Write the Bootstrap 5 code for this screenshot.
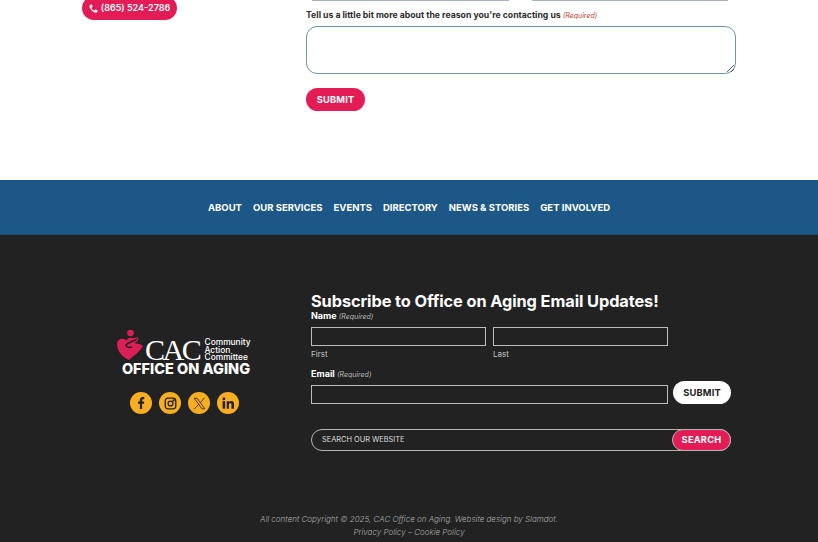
<!DOCTYPE html>
<html lang="en"><head><meta charset="utf-8">
<link href="https://cdn.jsdelivr.net/npm/bootstrap@5.3.0/dist/css/bootstrap.min.css" rel="stylesheet">
<style>
html,body{height:542px;overflow:hidden}
body{font-family:Inter,"Liberation Sans",sans-serif;background:#fff;color:#222}
.pagewrap{width:818px}
.upper{height:180px}
.leftcol{width:306px;padding-left:82px;flex:none}
.phonebtn{width:95px;height:24px;margin-top:-4px;background:#e31c55;color:#fff;border-radius:12px;font-size:9px;font-weight:600;gap:3px}
.rightcol{width:430px;flex:none}
.topinputs{height:1px;gap:23px;padding:0 8px 0 6px}
.topinputs span{background:#a9b4bd;height:1px;display:block}
.reqlabel{font-size:8.7px;font-weight:700;margin-top:8px;line-height:12px;color:#2d2d2d}
.req{font-size:7px;font-style:italic;font-weight:400;color:#c0392b}
.bigarea.form-control{height:48px;margin-top:4px;border:1px solid #6d94b0;border-radius:11px;box-shadow:none;display:block}
.pinkbtn{background:#e31c55;color:#fff;border-radius:14px;font-weight:700;font-size:9.3px;letter-spacing:.2px;border:0;padding:0}
.subbtn{width:59px;height:23px;margin-top:14px}
.navband{height:55px;background:#1d5788;gap:11px;border-bottom:1px solid #1a4d78;font-size:9.5px;font-weight:700;color:#fff;padding-top:2px}
.navband a{color:#fff;text-decoration:none}
.darkfoot{height:307px;background:#222;color:#fff;position:relative}
.logocol{width:311px;flex:none;padding-top:94px}
.logobox{height:33px;width:138px;margin-left:116px}
.logotype{font-family:"Liberation Serif",serif;font-size:30px;line-height:30px;letter-spacing:-2.4px;color:#fff;margin:6px 0 0 1px}
.logosmall{font-size:8.4px;line-height:7.5px;font-weight:500;margin:10px 0 0 5px}
.aging{font-size:14.5px;font-weight:800;line-height:13px;width:140px;margin-left:116px;text-align:center;margin-top:0;white-space:nowrap}
.socials{gap:7px;margin-top:17px;margin-left:130px}
.socialdot{width:22px;height:22px;border-radius:50%;background:#f9ae21}
.formcol{width:420px;flex:none}
.subtitle{font-size:16.35px;font-weight:700;line-height:20px;margin:56px 0 0;color:#fff;letter-spacing:-.1px}
.flabel{font-size:9px;font-weight:700;line-height:12px;margin-top:-1px}
.flabel .req{color:#bbb;font-size:7px}
.nameline{gap:7px;margin-top:4px}
.namefield{width:175px}
.dkinput.form-control{height:19px;min-height:0;padding:0;border:1px solid #bdbdbd;border-radius:0;background:transparent;display:block}
.sublabel{font-size:8px;line-height:10px;color:#c4c4c4;margin-top:3px}
.emaillabel{margin-top:9px}
.emailline{gap:5px;margin-top:0}
.emailinput.form-control{width:357px;flex:none}
.whitebtn{width:59px;height:23px;border-radius:14px;background:#fff;color:#222;font-size:9.3px;font-weight:700;letter-spacing:.2px;border:0;padding:0}
.searchbar{width:420px;height:22px;border:1px solid #b5b5b5;border-radius:12px;margin-top:25px;font-size:7.4px;color:#ddd;padding-left:10px}
.searchbtn{width:59px;height:22px;margin:-1px -1px -1px auto;border:1px solid #b5b5b5}
.copyline{position:absolute;left:0;right:0;top:278px;font-size:8px;line-height:13px;font-style:italic;font-weight:300;color:#aaa;text-align:center}
</style></head>
<body>
<div class="pagewrap">
 <div class="upper d-flex">
  <div class="leftcol"><div class="phonebtn d-flex align-items-center justify-content-center">
   <svg width="9" height="9" viewBox="0 0 16 16" fill="#fff"><path d="M3.600.8 1.500 2.200C.7 3 .6 4.600 1.500 6.800c2 4.200 4.700 7 8.800 8.400 1.700.5 3.200.3 4-.5l1.200-2.100c.2-.4.100-.8-.3-1l-3-1.800c-.3-.2-.8-.1-1 .2l-1.100 1.300c-.3.300-.7.400-1.100.2C7.300 11.500 5.300 9.500 4.500 7.400c-.2-.4 0-.8.300-1.100l1.300-1.100c.300-.2.400-.7.200-1L4.600 1c-.2-.4-.7-.5-1-.2z"/></svg>
   (865) 524-2786</div></div>
  <div class="rightcol">
   <div class="topinputs d-flex"><span class="flex-fill"></span><span class="flex-fill"></span></div>
   <div class="reqlabel">Tell us a little bit more about the reason you're contacting us <span class="req">(Required)</span></div>
   <textarea class="bigarea form-control" aria-label="Reason"></textarea>
   <button type="button" class="btn pinkbtn subbtn d-flex align-items-center justify-content-center">SUBMIT</button>
  </div>
 </div>
 <nav class="navband d-flex align-items-center justify-content-center">
  <a href="#">ABOUT</a><a href="#">OUR SERVICES</a><a href="#">EVENTS</a><a href="#">DIRECTORY</a><a href="#">NEWS &amp; STORIES</a><a href="#">GET INVOLVED</a>
 </nav>
 <footer class="darkfoot d-flex">
  <div class="logocol">
   <div class="logobox d-flex align-items-start">
    <svg width="28" height="33" viewBox="0 0 28 33" class="flex-shrink-0"><circle cx="14.500" cy="4" r="3.300" fill="#d91f55"/><path d="M1 15c0-5 6-7 9.500-3.500C12 9 14 8.500 16 9l6-.5c1 2 0 4-4 5.500 3 .5 7 1 9 3-3 6-11 11-14 14C6 28 1 22 1 15z" fill="#d91f55"/><path d="M21 10c-4 3-9 3-11 6 0 2 3 3 6 2" fill="none" stroke="#222" stroke-width="1.500"/></svg>
    <span class="logotype">CAC</span>
    <span class="logosmall">Community<br>Action<br>Committee</span>
   </div>
   <div class="aging">OFFICE ON AGING</div>
   <div class="socials d-flex">
    <span class="socialdot d-flex align-items-center justify-content-center"><svg width="12" height="12" viewBox="0 0 16 16" fill="#222"><path d="M9.500 16V9h2.400l.4-3H9.500V4.300c0-.8.300-1.400 1.400-1.400h1.500V.2C12 .1 11.200 0 10.300 0 8.100 0 6.500 1.300 6.500 3.900V6H4v3h2.500v7z"/></svg></span>
    <span class="socialdot d-flex align-items-center justify-content-center"><svg width="13" height="13" viewBox="0 0 16 16" fill="none" stroke="#222" stroke-width="1.600"><rect x="1.500" y="1.500" width="13" height="13" rx="3.500"/><circle cx="8" cy="8" r="3"/><circle cx="11.800" cy="4.200" r=".6" fill="#222"/></svg></span>
    <span class="socialdot d-flex align-items-center justify-content-center"><svg width="13" height="13" viewBox="0 0 16 16" fill="none" stroke="#222"><path d="M1.500 1.500h3.500l9.500 13H11z"/><path d="M14 1 9 7M7 9l-5.500 6"/></svg></span>
    <span class="socialdot d-flex align-items-center justify-content-center"><svg width="12" height="12" viewBox="0 0 16 16" fill="#222"><circle cx="2.500" cy="2.500" r="1.900"/><rect x=".8" y="5.500" width="3.400" height="10"/><path d="M6.300 5.500h3.200v1.400c.6-1 1.800-1.700 3.100-1.700 2.800 0 3.400 1.900 3.400 4.400v5.900h-3.400v-5.200c0-1.200-.2-2.100-1.500-2.100s-1.900.9-1.900 2.100v5.200H6.300z"/></svg></span>
   </div>
  </div>
  <div class="formcol">
   <h2 class="subtitle">Subscribe to Office on Aging Email Updates!</h2>
   <div class="flabel">Name <span class="req">(Required)</span></div>
   <div class="d-flex nameline">
    <div class="namefield"><input class="dkinput form-control" aria-label="First"><div class="sublabel">First</div></div>
    <div class="namefield"><input class="dkinput form-control" aria-label="Last"><div class="sublabel">Last</div></div>
   </div>
   <div class="flabel emaillabel">Email <span class="req">(Required)</span></div>
   <div class="d-flex align-items-end emailline"><input class="dkinput emailinput form-control" aria-label="Email"><button type="button" class="btn whitebtn d-flex align-items-center justify-content-center">SUBMIT</button></div>
   <div class="searchbar d-flex align-items-center">SEARCH OUR WEBSITE<button type="button" class="btn pinkbtn searchbtn d-flex align-items-center justify-content-center">SEARCH</button></div>
  </div>
  <div class="copyline">All content Copyright © 2025, CAC Office on Aging. Website design by Slamdot.<br>Privacy Policy – Cookie Policy</div>
 </footer>
</div>
<script src="https://cdn.jsdelivr.net/npm/bootstrap@5.3.0/dist/js/bootstrap.bundle.min.js"></script>
</body></html>
